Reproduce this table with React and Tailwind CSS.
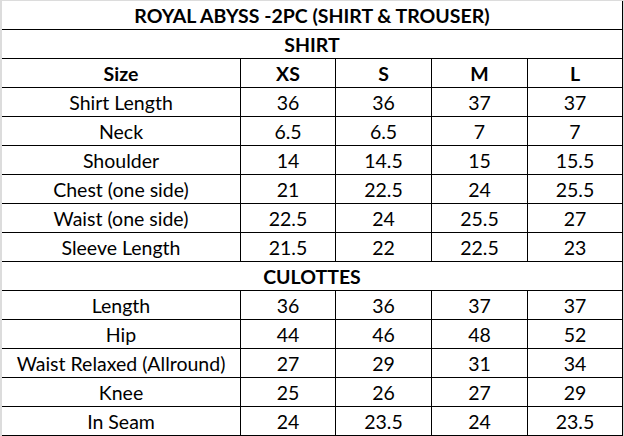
const sizes = ["XS", "S", "M", "L"];

const shirt = [
  ["Shirt Length", "36", "36", "37", "37"],
  ["Neck", "6.5", "6.5", "7", "7"],
  ["Shoulder", "14", "14.5", "15", "15.5"],
  ["Chest (one side)", "21", "22.5", "24", "25.5"],
  ["Waist (one side)", "22.5", "24", "25.5", "27"],
  ["Sleeve Length", "21.5", "22", "22.5", "23"],
];

const culottes = [
  ["Length", "36", "36", "37", "37"],
  ["Hip", "44", "46", "48", "52"],
  ["Waist Relaxed (Allround)", "27", "29", "31", "34"],
  ["Knee", "25", "26", "27", "29"],
  ["In Seam", "24", "23.5", "24", "23.5"],
];

function Cell({ children, bold }) {
  return (
    <div
      className={`flex h-[29px] items-center justify-center whitespace-nowrap border-b border-r border-black pt-[2px] ${
        bold ? "font-bold" : ""
      }`}
    >
      {children}
    </div>
  );
}

function Span({ children }) {
  return (
    <div className="col-span-5 flex h-[29px] items-center justify-center border-b border-r border-black pt-[2px] font-bold">
      {children}
    </div>
  );
}

function Rows({ rows }) {
  return rows.map((row) =>
    row.map((v, i) => <Cell key={row[0] + i}>{v}</Cell>)
  );
}

export default function App() {
  return (
    <div className="h-[436px] w-[624px] overflow-hidden bg-[#dcdcdc] pl-[2px] pt-px">
      <div
        className="grid w-[621px] grid-cols-[239px_95px_96px_96px_95px] bg-white text-[19.5px] leading-none text-black"
        style={{ fontFamily: "Lato, 'Open Sans', sans-serif" }}
      >
        {/* Title */}
        <Span>ROYAL ABYSS -2PC (SHIRT &amp; TROUSER)</Span>

        {/* Shirt */}
        <Span>SHIRT</Span>
        <Cell bold>Size</Cell>
        {sizes.map((s) => (
          <Cell key={s} bold>
            {s}
          </Cell>
        ))}
        <Rows rows={shirt} />

        {/* Culottes */}
        <Span>CULOTTES</Span>
        <Rows rows={culottes} />
      </div>
    </div>
  );
}
